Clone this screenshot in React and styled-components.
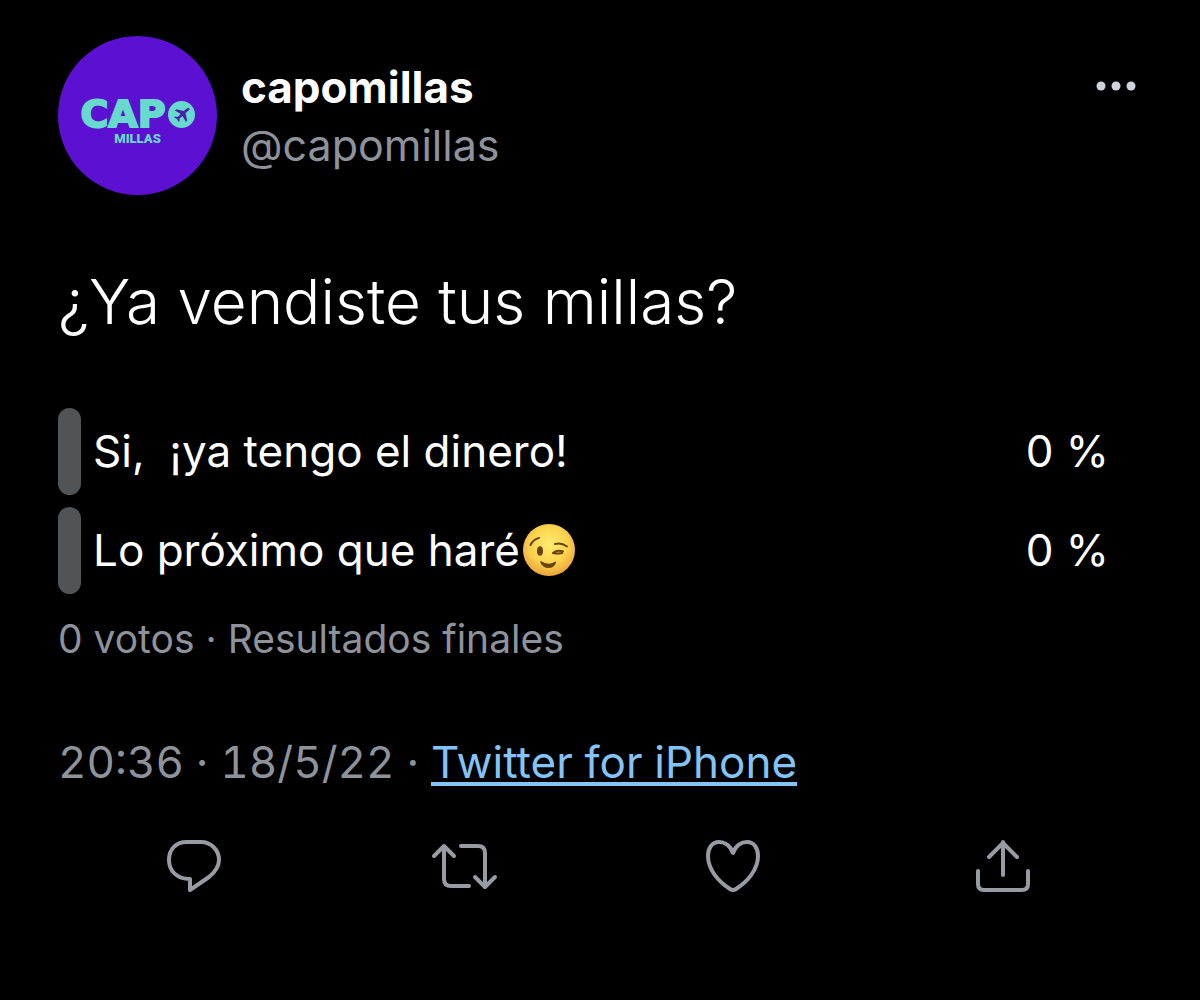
import styled, { createGlobalStyle } from 'styled-components';

const GlobalStyle = createGlobalStyle`
  body {
    margin: 0;
    background-color: #000;
    color: #fff;
    font-family: Inter, 'Liberation Sans', sans-serif;
  }
`;

const Tweet = styled.article`
  box-sizing: border-box;
  padding: 36px 62px 40px 58px;
`;

const Header = styled.header`
  display: flex;
  align-items: flex-start;
  gap: 24px;
`;

const Avatar = styled.a`
  display: flex;
  flex: none;
  flex-direction: column;
  align-items: center;
  box-sizing: border-box;
  width: 159px;
  height: 159px;
  padding-top: 64px;
  border-radius: 50%;
  background-color: #5c10d1;
  color: #67d9cd;
  text-decoration: none;
`;

const Wordmark = styled.span`
  display: flex;
  align-items: center;
  gap: 2px;
  font-family: 'DejaVu Sans', sans-serif;
  font-size: 38px;
  font-weight: 700;
  line-height: 29px;
  -webkit-text-stroke: 2px #67d9cd;
`;

const LogoCaption = styled.span`
  font-family: Roboto, sans-serif;
  font-size: 13px;
  font-weight: 900;
  line-height: 20px;
`;

const Author = styled.div`
  flex: 1;
  padding-top: 22px;
`;

const Name = styled.h1`
  margin: 0;
  font-size: 44px;
  font-weight: 700;
  line-height: 58px;
`;

const Handle = styled.p`
  margin: 0;
  font-size: 43px;
  line-height: 58px;
  color: #8e929b;
`;

const IconButton = styled.button`
  display: flex;
  padding: 0;
  border: none;
  background-color: transparent;
  color: ${({ $color }) => $color || '#979ba4'};
  cursor: pointer;
`;

const MoreButton = styled(IconButton)`
  margin-top: 44px;
`;

const Question = styled.p`
  margin: 67px 0 0;
  font-size: 62px;
  font-weight: 300;
  line-height: 80px;
`;

const Poll = styled.ul`
  display: grid;
  gap: 12px;
  margin: 66px 0 0;
  padding: 0;
  list-style: none;
`;

const Option = styled.li`
  display: flex;
  align-items: center;
  gap: 12px;
  padding-right: 29px;
  font-size: 44px;
  line-height: 87px;
`;

const Bar = styled.span`
  width: 23px;
  height: 87px;
  border-radius: 12px;
  background-color: #515457;
`;

const OptionText = styled.span`
  display: flex;
  flex: 1;
  align-items: center;
  gap: 2px;
  white-space: pre;
`;

const Votes = styled.p`
  margin: 17px 0 0;
  font-size: 39px;
  line-height: 56px;
  color: #8e929b;
`;

const Meta = styled.p`
  margin: 65px 0 0;
  font-size: 44px;
  font-variant-numeric: tabular-nums;
  line-height: 60px;
  color: #8e929b;
`;

const Source = styled.a`
  color: #83c3f5;
  text-decoration: underline;
  text-decoration-thickness: 4px;
  text-underline-offset: 4px;
`;

const Actions = styled.div`
  display: grid;
  grid-template-columns: repeat(4, 1fr);
  justify-items: center;
  margin-top: 44px;
`;

const options = [
  { text: 'Si,  ¡ya tengo el dinero!', percent: 0 },
  { text: 'Lo próximo que haré', percent: 0, wink: true },
];

const actions = [
  {
    label: 'Responder',
    paths: ['M23 6H37C47 6 55 14 55 24C55 31 51 36 45 41L26 54V43C13 43 5 35 5 24C5 13 12 6 23 6Z'],
  },
  {
    label: 'Retwittear',
    paths: [
      'M0 20L10 10L20 20M10 10V43Q10 50 17 50H35',
      'M27 10H44Q51 10 51 17V50M41 41L51 51L61 41',
    ],
  },
  {
    label: 'Me gusta',
    paths: [
      'M29 17C26 9 20 6 15 6C8 6 4 12 4 20C4 34 15 46 26 53Q29 55 32 53C43 46 54 34 54 20C54 12 50 6 43 6C38 6 32 9 29 17Z',
    ],
  },
  {
    label: 'Compartir',
    paths: ['M29 39V6M15 21L29 7L43 21', 'M4 35V48Q4 54 10 54H48Q54 54 54 48V35'],
  },
];

const Plane = () => (
  <svg width="27" height="27" viewBox="0 0 27 27" aria-hidden="true">
    <circle cx="13.5" cy="13.5" r="13.5" fill="#67d9cd" />
    <path
      d="M21.5 7.5C20.7 6.5 19.4 7 18.5 7.8L15.8 10.1L8.3 8.2L7 9.4L12.7 13.1L9.8 15.9L7.2 15.5L6.2 16.4L9 18L10.6 21L11.6 20L11.5 17.4L14.5 14.9L17.8 20.8L19.1 19.5L17.6 12.1L20.4 9.6C21.4 8.8 22 8.2 21.5 7.5Z"
      fill="#4b20a8"
    />
  </svg>
);

const Wink = () => (
  <svg width="54" height="54" viewBox="0 0 54 54" role="img" aria-label="guiño">
    <defs>
      <radialGradient id="face" cx="50%" cy="40%" r="60%">
        <stop offset="0" stopColor="#ffec70" />
        <stop offset="0.6" stopColor="#fbd34f" />
        <stop offset="1" stopColor="#eda43b" />
      </radialGradient>
    </defs>
    <circle cx="27" cy="26" r="26" fill="url(#face)" />
    <ellipse cx="18" cy="27" rx="3" ry="4.8" fill="#6a430c" />
    <g fill="none" stroke="#6a430c" strokeLinecap="round" strokeWidth="2">
      <path d="M8.5 21Q11.5 15 17 14" />
      <path d="M33 20Q39 18 45 22.5" />
      <path d="M31 29Q35 25.5 41 27.5M31 29Q36 30 40 29" />
    </g>
    <path d="M18.5 37Q27 42 33.5 37.5Q34.5 37.5 34 39Q32 44 26.5 44Q21 44 18.5 39Q18 37.5 18.5 37Z" fill="#6a430c" />
  </svg>
);

const App = () => {
  return (
    <>
      <GlobalStyle />
      <Tweet>
        <Header>
          <Avatar href="#capomillas">
            <Wordmark>
              CAP
              <Plane />
            </Wordmark>
            <LogoCaption>MILLAS</LogoCaption>
          </Avatar>
          <Author>
            <Name>capomillas</Name>
            <Handle>@capomillas</Handle>
          </Author>
          <MoreButton aria-label="Más opciones" $color="#ccd3dc">
            <svg width="42" height="12" viewBox="0 0 42 12" fill="currentColor">
              <circle cx="5" cy="6" r="4.5" />
              <circle cx="20" cy="6" r="4.5" />
              <circle cx="35" cy="6" r="4.5" />
            </svg>
          </MoreButton>
        </Header>

        <Question>¿Ya vendiste tus millas?</Question>

        <Poll>
          {options.map(({ text, percent, wink }) => (
            <Option key={text}>
              <Bar />
              <OptionText>
                {text}
                {wink && <Wink />}
              </OptionText>
              <span>{percent} %</span>
            </Option>
          ))}
        </Poll>
        <Votes>0 votos · Resultados finales</Votes>

        <Meta>
          20:36 · 18/5/22 · <Source href="#iphone">Twitter for iPhone</Source>
        </Meta>

        <Actions>
          {actions.map(({ label, paths }) => (
            <IconButton key={label} aria-label={label}>
              <svg
                width="58"
                height="60"
                viewBox="0 0 58 60"
                overflow="visible"
                fill="none"
                stroke="currentColor"
                strokeWidth="4"
                strokeLinecap="round"
                strokeLinejoin="round"
              >
                {paths.map((d) => (
                  <path key={d} d={d} />
                ))}
              </svg>
            </IconButton>
          ))}
        </Actions>
      </Tweet>
    </>
  );
};

export default App;
